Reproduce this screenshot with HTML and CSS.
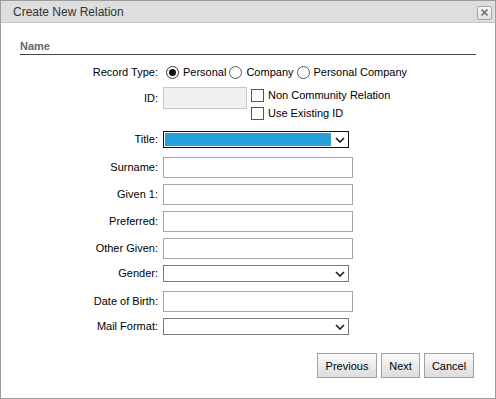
FILE: index.html
```html
<!DOCTYPE html>
<html>
<head>
<meta charset="utf-8">
<link rel="stylesheet" href="styles.css">
</head>
<body>
<div class="dialog">
  <div class="titlebar">
    <span class="title">Create New Relation</span>
    <span class="close"><svg width="9" height="9" viewBox="0 0 9 9"><path d="M1.5 1.5 L7.5 7.5 M7.5 1.5 L1.5 7.5" stroke="#6a6a6a" stroke-width="1.6" fill="none"/></svg></span>
  </div>
  <div class="content">
    <div class="section">Name</div>
    <div class="form">
      <div class="row row-radio">
        <label class="label">Record Type:</label>
        <div class="field radios">
          <span class="radio checked"></span><span class="rtext">Personal</span>
          <span class="radio"></span><span class="rtext">Company</span>
          <span class="radio"></span><span class="rtext">Personal Company</span>
        </div>
      </div>
      <div class="row row-id">
        <label class="label label-id">ID:</label>
        <div class="field idfield">
          <div class="id-input"></div>
          <div class="checks">
            <div class="check"><span class="box"></span><span>Non Community Relation</span></div>
            <div class="check"><span class="box"></span><span>Use Existing ID</span></div>
          </div>
        </div>
      </div>
      <div class="row row-select">
        <label class="label label-select">Title:</label>
        <div class="select focused"><span class="sel-fill"></span><svg class="chev" width="10" height="6" viewBox="0 0 10 6"><path d="M1 1 L5 5 L9 1" stroke="#222" stroke-width="1.7" fill="none"/></svg></div>
      </div>
      <div class="row row-input">
        <label class="label">Surname:</label>
        <div class="input"></div>
      </div>
      <div class="row row-input">
        <label class="label">Given 1:</label>
        <div class="input"></div>
      </div>
      <div class="row row-input">
        <label class="label">Preferred:</label>
        <div class="input"></div>
      </div>
      <div class="row row-input">
        <label class="label">Other Given:</label>
        <div class="input"></div>
      </div>
      <div class="row row-select">
        <label class="label label-select">Gender:</label>
        <div class="select"><span class="sel-empty"></span><svg class="chev" width="10" height="6" viewBox="0 0 10 6"><path d="M1 1 L5 5 L9 1" stroke="#222" stroke-width="1.7" fill="none"/></svg></div>
      </div>
      <div class="row row-input">
        <label class="label">Date of Birth:</label>
        <div class="input"></div>
      </div>
      <div class="row row-select">
        <label class="label label-select">Mail Format:</label>
        <div class="select"><span class="sel-empty"></span><svg class="chev" width="10" height="6" viewBox="0 0 10 6"><path d="M1 1 L5 5 L9 1" stroke="#222" stroke-width="1.7" fill="none"/></svg></div>
      </div>
    </div>
    <div class="buttons">
      <button class="btn btn-prev">Previous</button>
      <button class="btn btn-next">Next</button>
      <button class="btn btn-cancel">Cancel</button>
    </div>
  </div>
</div>
</body>
</html>
```
FILE: styles.css
```css
* { box-sizing: border-box; }
html, body { margin: 0; padding: 0; background: #fff; }
body { font-family: "Liberation Sans", Arial, sans-serif; font-size: 11px; color: #000; }

.dialog {
  width: 496px;
  height: 399px;
  border: 1px solid #9c9c9c;
  background: #fff;
  display: flex;
  flex-direction: column;
}

.titlebar {
  height: 22px;
  background: #dedede;
  border-bottom: 1px solid #c6c6c6;
  display: flex;
  align-items: center;
  justify-content: space-between;
  padding: 0 3px 0 12px;
  flex: none;
}
.title { font-size: 12px; color: #333; line-height: 14px; }
.close {
  width: 15px;
  height: 14px;
  border: 1px solid #a4a4a4;
  border-radius: 2px;
  background: linear-gradient(#f6f6f6, #e2e2e2);
  display: flex;
  align-items: center;
  justify-content: center;
  margin-top: 2px;
}
.close svg { display: block; }

.content { padding: 0 19px; flex: 1; display: flex; flex-direction: column; }

.section {
  margin-top: 16px;
  font-weight: bold;
  color: #666;
  font-size: 11px;
  line-height: 14px;
  padding-bottom: 1px;
  border-bottom: 1px solid #444;
}

.form { display: flex; flex-direction: column; }
.row { display: flex; align-items: flex-start; margin-top: 6px; }
.label {
  flex: none;
  width: 138px;
  margin-right: 5px;
  text-align: right;
  color: #000;
  line-height: 21px;
  white-space: nowrap;
}
.field { flex: none; }

.row-radio { margin-top: 8px; height: 18px; }
.row-radio .label { line-height: 18px; }
.radios { display: flex; align-items: center; height: 18px; white-space: nowrap; }
.radio {
  width: 13px;
  height: 13px;
  border: 1px solid #555;
  border-radius: 50%;
  background: #fff;
  margin-left: 3px;
  display: inline-flex;
  align-items: center;
  justify-content: center;
  flex: none;
}
.radio.checked { border-color: #333; }
.radio.checked::after {
  content: "";
  width: 7px;
  height: 7px;
  border-radius: 50%;
  background: #111;
}
.rtext { margin-left: 4px; line-height: 18px; }

.row-id { height: 38px; }
.label-id { line-height: 22px; }
.idfield { display: flex; align-items: flex-start; }
.id-input {
  flex: none;
  width: 84px;
  height: 22px;
  background: #f0f0f0;
  border: 1px solid #c8c8c8;
}
.checks { flex: none; margin-left: 4px; margin-top: 2px; display: flex; flex-direction: column; }
.check { display: flex; align-items: flex-start; height: 18px; line-height: 13px; white-space: nowrap; }
.check .box {
  width: 13px;
  height: 13px;
  border: 1px solid #555;
  background: #fff;
  margin-right: 4px;
  flex: none;
}

.row-input { height: 21px; }
.input {
  flex: none;
  width: 190px;
  height: 21px;
  border: 1px solid #a6a6a6;
  background: #fff;
}

.row-select { height: 20px; }
.label-select { line-height: 17px; }
.select {
  flex: none;
  width: 186px;
  height: 17px;
  border: 1px solid #7a7a7a;
  background: #fff;
  display: flex;
  align-items: center;
  padding: 1px 3px 1px 1px;
}
.select.focused { border-color: #111; }
.sel-fill { width: 166px; height: 13px; background: #27a1db; }
.sel-empty { width: 166px; height: 13px; }
.chev { display: block; margin-left: auto; }

.buttons {
  display: flex;
  justify-content: flex-end;
  gap: 4px;
  margin-top: 15px;
  padding-right: 2px;
}
.btn {
  height: 25px;
  border: 1px solid #a0a0a0;
  background: linear-gradient(#fafafa, #dcdcdc);
  font-family: "Liberation Sans", Arial, sans-serif;
  font-size: 11px;
  color: #000;
  padding: 0;
  margin: 0;
  border-radius: 0;
}
.btn-prev { width: 60px; }
.btn-next { width: 39px; }
.btn-cancel { width: 50px; }
```
